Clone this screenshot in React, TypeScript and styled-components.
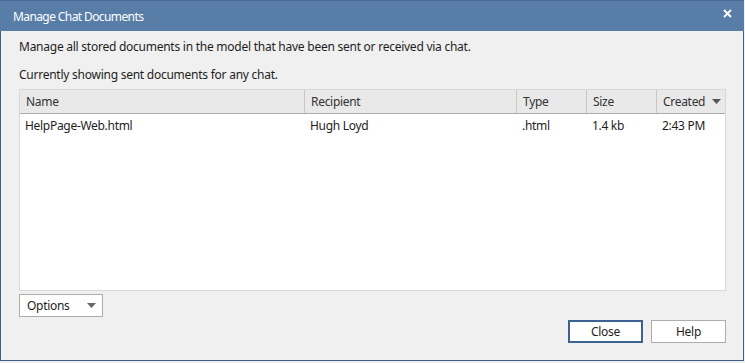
import styled, { createGlobalStyle } from "styled-components";

const GlobalStyle = createGlobalStyle`
  html, body {
    margin: 0;
    padding: 0;
    background: #f0f0f0;
  }
  body {
    font-family: "Noto Sans", "Liberation Sans", sans-serif;
    font-size: 12px;
    color: #1e1e1e;
  }
`;

const columns = "285px 212px 70px 70px 1fr";

const documents = [
  {
    name: "HelpPage-Web.html",
    recipient: "Hugh Loyd",
    type: ".html",
    size: "1.4 kb",
    created: "2:43 PM",
  },
];

const Window = styled.div`
  width: 744px;
  height: 361px;
  box-sizing: border-box;
  border: 1px solid #3d5c82;
  border-top: none;
  display: flex;
  flex-direction: column;
  background: #f0f0f0;
`;

const TitleBar = styled.div`
  height: 31px;
  flex: none;
  background: #587ea8;
  display: flex;
  align-items: center;
  justify-content: space-between;
  padding: 0 12px 0 13px;
  color: #ffffff;
  margin: 0 -1px;
  border-top: 1px solid #4a6c94;
  box-sizing: border-box;
`;

const Title = styled.span`
  font-size: 12px;
  letter-spacing: -0.6px;
`;

const CloseGlyph = styled.svg`
  width: 9px;
  height: 9px;
  margin-top: -6px;
`;

const Body = styled.div`
  flex: 1;
  display: flex;
  flex-direction: column;
  padding: 0 17px 0 18px;
`;

const Note = styled.div<{ $top: number }>`
  margin-top: ${(p) => p.$top}px;
  line-height: 16px;
  letter-spacing: -0.25px;
`;

const ListBox = styled.div`
  margin-top: 6px;
  height: 202px;
  box-sizing: border-box;
  border: 1px solid #d9d9d9;
  background: #ffffff;
  display: flex;
  flex-direction: column;
`;

const HeaderRow = styled.div`
  display: grid;
  grid-template-columns: ${columns};
  height: 24px;
  background: #e9e9e9;
  border-bottom: 1px solid #acacac;
  box-sizing: border-box;
`;

const HeaderCell = styled.div<{ $last?: boolean }>`
  display: flex;
  align-items: center;
  justify-content: space-between;
  padding: ${(p) => (p.$last ? "0 3px 0 6px" : "0 6px")};
  border-right: ${(p) => (p.$last ? "none" : "1px solid #c8c8c8")};
  color: #333333;
  letter-spacing: -0.3px;
`;

const SortArrow = styled.svg`
  width: 9px;
  height: 5px;
  margin-right: 1px;
`;

const DataRow = styled.div`
  display: grid;
  grid-template-columns: ${columns};
  height: 22px;
  align-items: center;
`;

const DataCell = styled.div`
  padding: 0 5px;
  letter-spacing: -0.3px;
  white-space: nowrap;
`;

const Footer = styled.div`
  display: flex;
  flex-direction: column;
  margin-top: 3px;
`;

const OptionsButton = styled.button`
  width: 84px;
  height: 23px;
  box-sizing: border-box;
  border: 1px solid #adadad;
  background: #ffffff;
  display: flex;
  align-items: center;
  justify-content: space-between;
  padding: 0 5px 0 7px;
  font: inherit;
  color: #1e1e1e;
  letter-spacing: -0.3px;
`;

const ButtonRow = styled.div`
  display: flex;
  justify-content: flex-end;
  gap: 8px;
  margin-top: 3px;
`;

const DialogButton = styled.button<{ $primary?: boolean }>`
  width: 75px;
  height: 23px;
  box-sizing: border-box;
  border: ${(p) => (p.$primary ? "2px solid #3d6190" : "1px solid #adadad")};
  background: #ffffff;
  font: inherit;
  color: #1e1e1e;
  letter-spacing: -0.3px;
`;

const headers = ["Name", "Recipient", "Type", "Size", "Created"];

export default function App() {
  return (
    <>
      <GlobalStyle />
      <Window>
        <TitleBar>
          <Title>Manage Chat Documents</Title>
          <CloseGlyph viewBox="0 0 9 9">
            <path d="M1 1 L8 8 M8 1 L1 8" stroke="#ffffff" strokeWidth="1.8" />
          </CloseGlyph>
        </TitleBar>
        <Body>
          <Note $top={8}>
            Manage all stored documents in the model that have been sent or received via chat.
          </Note>
          <Note $top={12}>Currently showing sent documents for any chat.</Note>
          <ListBox>
            <HeaderRow>
              {headers.map((h, i) => (
                <HeaderCell key={h} $last={i === headers.length - 1}>
                  <span>{h}</span>
                  {i === headers.length - 1 && (
                    <SortArrow viewBox="0 0 9 5">
                      <path d="M0 0 L9 0 L4.5 5 Z" fill="#555555" />
                    </SortArrow>
                  )}
                </HeaderCell>
              ))}
            </HeaderRow>
            {documents.map((d) => (
              <DataRow key={d.name}>
                <DataCell>{d.name}</DataCell>
                <DataCell>{d.recipient}</DataCell>
                <DataCell>{d.type}</DataCell>
                <DataCell>{d.size}</DataCell>
                <DataCell>{d.created}</DataCell>
              </DataRow>
            ))}
          </ListBox>
          <Footer>
            <OptionsButton>
              <span>Options</span>
              <SortArrow viewBox="0 0 9 5">
                <path d="M0 0 L9 0 L4.5 5 Z" fill="#666666" />
              </SortArrow>
            </OptionsButton>
            <ButtonRow>
              <DialogButton $primary>Close</DialogButton>
              <DialogButton>Help</DialogButton>
            </ButtonRow>
          </Footer>
        </Body>
      </Window>
    </>
  );
}
